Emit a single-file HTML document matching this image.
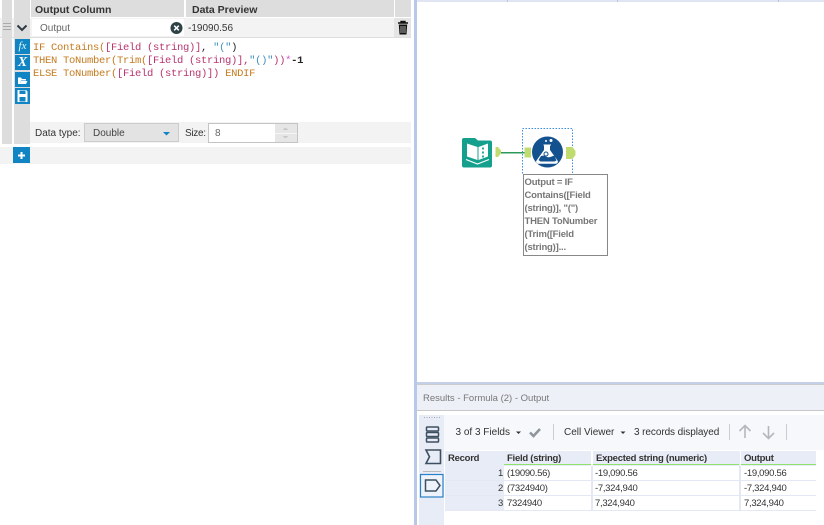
<!DOCTYPE html>
<html><head><meta charset="utf-8"><style>
html,body{margin:0;padding:0;background:#fff}
#p{position:relative;width:824px;height:525px;overflow:hidden;background:#fff;font-family:"Liberation Sans",sans-serif;color:#222}
#p div{position:absolute;white-space:nowrap}
.m{font-family:"Liberation Mono",monospace;font-size:10.5px;line-height:13px;letter-spacing:-.3px}
.o{color:#c47a1e}.r{color:#b8336e}.b{color:#3f8fc0}.k{color:#222;font-weight:bold}.g{color:#d64fd0}
.i{background:#1184c4}
.t{font-size:10px;color:#333}
.c{background:#fff;height:14px;line-height:16px;font-size:9.5px;letter-spacing:-.3px;color:#333}
.h{background:#e8ecf6;height:15px;line-height:16px;font-size:9.5px;letter-spacing:-.25px;font-weight:bold;color:#333}
.gl{height:1.5px;background:#8ee46a}
svg{position:absolute;overflow:visible}
</style></head><body><div id="p">
<!-- left panel -->
<div style="left:2px;top:0;width:10px;height:144px;background:#ddd"></div>
<div style="left:14px;top:0;width:16px;height:144px;background:#ddd"></div>
<div style="left:31px;top:0;width:153px;height:17px;background:#ddd"></div>
<div style="left:186px;top:0;width:208px;height:17px;background:#ddd"></div>
<div style="left:395px;top:0;width:16px;height:17px;background:#ddd"></div>
<div style="left:35px;top:3px;font-size:10.5px;font-weight:bold;color:#333;line-height:14px">Output Column</div>
<div style="left:192px;top:3px;font-size:10.5px;font-weight:bold;color:#333;line-height:14px">Data Preview</div>
<div style="left:0;top:18px;width:411px;height:19px;background:#f3f3f3"></div>
<div style="left:2px;top:18px;width:10px;height:19px;background:#ddd"></div>
<div style="left:14px;top:18px;width:16px;height:19px;background:#ddd"></div>
<div style="left:3px;top:23px;width:8px;height:1px;background:#aaa"></div>
<div style="left:3px;top:26px;width:8px;height:1px;background:#aaa"></div>
<div style="left:3px;top:29px;width:8px;height:1px;background:#aaa"></div>
<svg style="left:0;top:0" width="40" height="40"><path d="M17.5 25.5l4.500 4.500 4.500-4.500" fill="none" stroke="#2b3a45" stroke-width="2"/></svg>
<div style="left:32px;top:19px;width:152px;height:17px;background:#fff"></div>
<div style="left:40px;top:21px;font-size:10px;line-height:15px;color:#666">Output</div>
<svg style="left:0;top:0" width="190" height="40"><circle cx="176.500" cy="28" r="6" fill="#2f4347"/><path d="M174.200 25.700l4.600 4.600m0-4.600l-4.600 4.600" stroke="#fff" stroke-width="1.500"/></svg>
<div style="left:188px;top:21px;font-size:10px;line-height:15px;color:#333">-19090.56</div>
<div style="left:394px;top:18px;width:17px;height:19px;background:#e4e4e4"></div>
<svg style="left:0;top:0" width="412" height="40"><path d="M398 23h10M401 23v-1.500h4V23" fill="none" stroke="#111" stroke-width="1.400"/><path d="M398.800 24.500h8.400l-.7 10h-7z" fill="#111"/><path d="M401 26v7M403 26v7M405 26v7" stroke="#e4e4e4" stroke-width=".7"/></svg>
<div style="left:0;top:37px;width:411px;height:1px;background:#ddd"></div>
<!-- code -->
<div class="m" style="left:33px;top:41.500px"><span class="o">IF Contains(</span><span class="r">[Field (string)]</span>, <span class="b">"("</span>)</div>
<div class="m" style="left:33px;top:54.500px"><span class="o">THEN ToNumber(Trim(</span><span class="r">[Field (string)]</span><span class="r">,</span><span class="b">"()"</span><span class="r">))</span><span class="g">*</span><span class="k">-1</span></div>
<div class="m" style="left:33px;top:67.500px"><span class="o">ELSE ToNumber(</span><span class="r">[Field (string)]</span><span class="r">)</span> <span class="o">ENDIF</span></div>
<!-- side icons -->
<div class="i" style="left:15px;top:39px;width:15px;height:15px;color:#dff;font:italic 11px/14px 'Liberation Serif',serif;text-align:center">fx</div>
<div class="i" style="left:15px;top:55px;width:15px;height:15px;color:#fff;font:italic bold 14px/15px 'Liberation Serif',serif;text-align:center">X</div>
<div class="i" style="left:15px;top:72px;width:15px;height:15px"></div>
<div class="i" style="left:15px;top:88px;width:15px;height:16px"></div>
<svg style="left:0;top:0" width="32" height="106"><path d="M18 84v-6.500h3l1 1.500h4v1.500h-5l-1.500 3.500zM19.500 84l1.500-3h6.500l-1.500 3z" fill="#fff"/><path d="M17.500 90h8.500l1.500 1.500v10.500h-10z" fill="#fff"/><rect x="19.500" y="90.500" width="6" height="3.500" fill="#1184c4"/><rect x="19.500" y="97" width="6" height="4.500" fill="#1184c4"/></svg>
<!-- data type bar -->
<div style="left:30px;top:122px;width:381px;height:21px;background:#f3f3f3"></div>
<div class="t" style="left:35px;top:127px;line-height:14px">Data type:</div>
<div style="left:84px;top:123px;width:95px;height:19px;background:#e3e3e3;border:1px solid #ccc;box-sizing:border-box"></div>
<div class="t" style="left:93px;top:127px;line-height:14px;color:#444">Double</div>
<svg style="left:0;top:0" width="180" height="145"><path d="M163 132h7l-3.500 3.500z" fill="#1184c4"/></svg>
<div class="t" style="left:185px;top:127px;line-height:14px;letter-spacing:-.3px">Size:</div>
<div style="left:208px;top:123px;width:90px;height:20px;background:#fff;border:1px solid #c4c4c4;box-sizing:border-box"></div>
<div style="left:275px;top:124px;width:22px;height:18px;background:#e6e6e6"></div>
<div style="left:275px;top:133px;width:22px;height:1px;background:#f6f6f6"></div>
<svg style="left:0;top:0" width="300" height="145"><path d="M282.500 130l3-2.500 3 2.500zM282.500 136l3 2.500 3-2.500z" fill="#c8c8c8"/></svg>
<div class="t" style="left:215px;top:127px;line-height:14px;color:#666">8</div>
<div style="left:0;top:147px;width:411px;height:17px;background:#f3f3f3"></div>
<div style="left:13px;top:147px;width:17px;height:16px;background:#1184c4"></div>
<svg style="left:0;top:0" width="32" height="165"><path d="M21.500 152v7M18 155.500h7" stroke="#fff" stroke-width="2"/></svg>
<!-- splitter -->
<div style="left:414px;top:0;width:3px;height:525px;background:#b8c8e8"></div>
<!-- canvas ruler -->
<div style="left:417px;top:0;width:407px;height:2px;background:#dfe5f3"></div>
<div style="left:507px;top:0;width:1px;height:2px;background:#bcc6dc"></div>
<div style="left:617px;top:0;width:1px;height:2px;background:#bcc6dc"></div>
<div style="left:778px;top:0;width:1px;height:2px;background:#bcc6dc"></div>
<!-- workflow -->
<svg style="left:0;top:0" width="824" height="300">
<path d="M462 140a2 2 0 0 1 2-2h11l3 2.500h12a2 2 0 0 1 2 2v23a2 2 0 0 1-2 2h-26a2 2 0 0 1-2-2z" fill="#14a08c"/>
<path d="M467 143.500l10.500 3.500v13l-10.500-3.500zM488 143.500l-9.500 3.500v13l9.500-3.500z" fill="#fff"/>
<path d="M466 159.500l11.500 4.500 11.500-4.500" fill="none" stroke="#fff" stroke-width="1.200"/>
<path d="M483 147.500v2M483 151.500v2M483 155.500v2" stroke="#14a08c" stroke-width="1.800"/>
<path d="M495.500 147h2.500l3 3.500v3l-3 3.500h-2.500z" fill="#c0dc70"/>
<rect x="501" y="152" width="25" height="1.500" fill="#2c9a5a"/>
<rect x="524.500" y="147.500" width="6.500" height="10" fill="#c0dc70"/>
<rect x="522.500" y="128.500" width="50" height="46" fill="none" stroke="#3b8fe0" stroke-width="1" stroke-dasharray="1.500 1.500"/>
<circle cx="547.500" cy="152" r="15.500" fill="#14528f"/>
<path d="M543.500 144.500h7.500v1h-1v4.500l7.500 10.500a2 2 0 0 1-1.700 3.200h-17.600a2 2 0 0 1-1.700-3.200l7.500-10.500v-4.500h-.5z" fill="#fff"/>
<path d="M541 156c4-1.500 5 1.500 8 1.200s4-1.800 5.500-1.200l2 4.500-2 1h-14l-2-1.500z" fill="#14528f"/>
<circle cx="546" cy="154" r="2" fill="none" stroke="#14528f" stroke-width="1"/>
<circle cx="551" cy="140.500" r="1.500" fill="#fff"/><circle cx="546" cy="141" r="1" fill="#fff"/>
<path d="M566 147h6.500l3 4v4l-3 4H566z" fill="#c0dc70"/>
</svg>
<div style="left:523px;top:174px;width:85px;height:82px;background:#fff;border:1px solid #888;box-sizing:border-box"></div>
<div style="left:524.500px;top:176px;font-size:9.500px;letter-spacing:-.2px;font-weight:bold;line-height:13px;color:#777">Output = IF<br>Contains([Field<br>(string)], "(")<br>THEN ToNumber<br>(Trim([Field<br>(string)]...</div>
<!-- results panel -->
<div style="left:417px;top:382px;width:407px;height:2px;background:#c4d0e8"></div>
<div style="left:417px;top:384px;width:407px;height:25px;background:#eef0f8;border-top:1px solid #ccc;border-bottom:1px solid #c8c8c8"></div>
<div style="left:423px;top:392px;font-size:9.500px;line-height:14px;color:#777">Results - Formula (2) - Output</div>
<div style="left:417px;top:412px;width:407px;height:113px;background:#fff"></div>
<div style="left:419px;top:415px;width:25px;height:110px;background:#e8ecf6"></div>
<div style="left:444px;top:415px;width:380px;height:35px;background:#f7f8fc"></div>
<svg style="left:0;top:0" width="824" height="525">
<path d="M424 417.500h16" stroke="#aaa" stroke-width="1" stroke-dasharray="1 1.500"/>
<g fill="none" stroke="#3d4f60" stroke-width="1.500"><rect x="426.500" y="427" width="12" height="4" rx=".8"/><rect x="426.500" y="432.500" width="12" height="4" rx=".8"/><rect x="426.500" y="438" width="12" height="4" rx=".8"/>
<path d="M426 450h14.500v13.500H426l3.500-6.800z" stroke-width="1.600"/></g>
<path d="M423 471.500h18" stroke="#bbb"/>
<rect x="420.500" y="474.500" width="22.500" height="22.500" fill="#eef2fa" stroke="#2a80c8" stroke-width="1.200"/>
<path d="M425.500 480h10.500l4 5.500-4 5.500h-10.500z" fill="none" stroke="#3d4f60" stroke-width="1.500"/>
<path d="M516 431.500h5l-2.500 2.500z" fill="#333"/>
<path d="M530 432.500l3.500 3.500 6.500-7" fill="none" stroke="#8f969c" stroke-width="2.600"/>
<path d="M553.500 424v16M729.500 424v16M786.500 424v16" stroke="#ccc"/>
<path d="M620.500 431.500h5l-2.500 2.500z" fill="#333"/>
<path d="M745 438v-12.500M739.500 431l5.500-5.500 5.500 5.500M768.500 426v12.500M763 433l5.500 5.500 5.500-5.500" fill="none" stroke="#b4b8bc" stroke-width="1.600"/>
</svg>
<div class="t" style="left:455.500px;top:426px;line-height:14px">3 of 3 Fields</div>
<div class="t" style="left:564px;top:426px;line-height:14px">Cell Viewer</div>
<div class="t" style="left:634px;top:426px;line-height:14px;letter-spacing:-.08px">3 records displayed</div>
<!-- table -->
<div class="h" style="left:445px;top:451px;width:58px;padding-left:3px">Record</div>
<div class="h" style="left:504px;top:451px;width:84px;padding-left:3px">Field (string)</div>
<div class="h" style="left:593px;top:451px;width:144px;padding-left:3px">Expected string (numeric)</div>
<div class="h" style="left:741px;top:451px;width:72px;padding-left:3px">Output</div>
<div class="gl" style="left:504px;top:463.500px;width:87px"></div>
<div class="gl" style="left:593px;top:463.500px;width:146px"></div>
<div class="gl" style="left:741px;top:463.500px;width:75px"></div>
<div style="left:445px;top:466px;width:371px;height:45px;background:#e4e8f4"></div>
<div class="c" style="left:445px;top:466px;width:58px;background:#e8ecf6;text-align:right;padding-right:1px">1</div>
<div class="c" style="left:445px;top:481px;width:58px;background:#e8ecf6;text-align:right;padding-right:1px">2</div>
<div class="c" style="left:445px;top:496px;width:58px;background:#e8ecf6;text-align:right;padding-right:1px">3</div>
<div class="c" style="left:504px;top:466px;width:84px;padding-left:3px">(19090.56)</div>
<div class="c" style="left:504px;top:481px;width:84px;padding-left:3px">(7324940)</div>
<div class="c" style="left:504px;top:496px;width:84px;padding-left:3px">7324940</div>
<div class="c" style="left:593px;top:466px;width:144px;padding-left:2px">-19,090.56</div>
<div class="c" style="left:593px;top:481px;width:144px;padding-left:2px">-7,324,940</div>
<div class="c" style="left:593px;top:496px;width:144px;padding-left:2px">7,324,940</div>
<div class="c" style="left:741px;top:466px;width:72px;padding-left:3px">-19,090.56</div>
<div class="c" style="left:741px;top:481px;width:72px;padding-left:3px">-7,324,940</div>
<div class="c" style="left:741px;top:496px;width:72px;padding-left:3px">7,324,940</div>
</div></body></html>
